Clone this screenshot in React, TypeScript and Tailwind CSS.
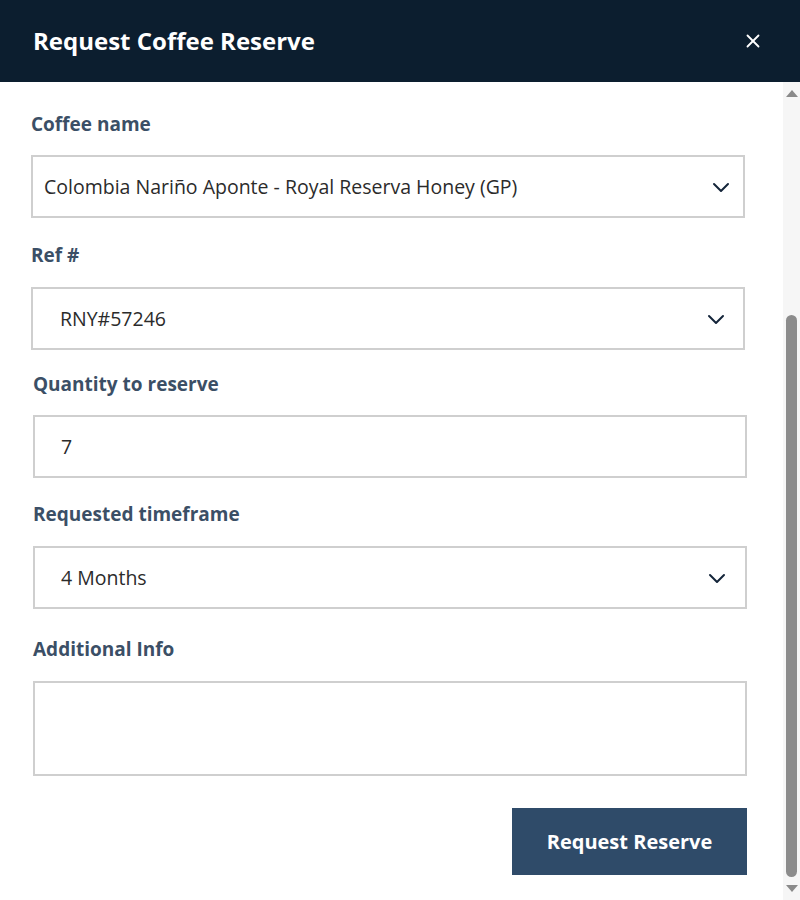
import { X } from "lucide-react";

function Chevron() {
  return (
    <svg width="18" height="12" viewBox="0 0 18 12" fill="none" className="shrink-0">
      <path d="M2 3l7 7 7-7" stroke="#14253a" strokeWidth="2" strokeLinecap="round" strokeLinejoin="round" />
    </svg>
  );
}

function Label({ children, className = "" }: { children: React.ReactNode; className?: string }) {
  return (
    <div className={`text-[19px] leading-6 font-bold text-[#3b4f66] ${className}`}>{children}</div>
  );
}

function SelectBox({ value, className = "", padLeft = "pl-[27px]", chevronRight = "pr-[18px]" }: { value: string; className?: string; padLeft?: string; chevronRight?: string }) {
  return (
    <div className={`flex items-center justify-between h-[63px] border-2 border-[#cfcfcf] bg-white ${padLeft} ${chevronRight} ${className}`}>
      <span className="text-[19.5px] text-[#2b2b2b]">{value}</span>
      <Chevron />
    </div>
  );
}

export default function App() {
  return (
    <div className="w-[800px] h-[900px] flex flex-col bg-white overflow-hidden" style={{ fontFamily: "'Open Sans', 'Noto Sans', sans-serif" }}>
      {/* Header */}
      <div className="h-[82px] shrink-0 bg-[#0c1e2f] flex items-center justify-between pl-[33px] pr-[36px]">
        <h1 className="text-[24px] font-bold text-white">Request Coffee Reserve</h1>
        <X className="size-[22px] text-white" strokeWidth={2} />
      </div>

      <div className="flex-1 flex min-h-0">
        {/* Form */}
        <div className="flex-1 pl-[31px] pr-[38px] pt-[30px]">
          <Label>Coffee name</Label>
          <SelectBox className="mt-[19px]" padLeft="pl-[11px]" chevronRight="pr-[13px]" value="Colombia Nariño Aponte - Royal Reserva Honey (GP)" />

          <Label className="mt-[25px]">Ref #</Label>
          <SelectBox className="mt-[20px]" value="RNY#57246" />

          <div className="pl-[2px] -mr-[2px]">
            <Label className="mt-[22px]">Quantity to reserve</Label>
            <div className="mt-[19px] h-[63px] border-2 border-[#cfcfcf] flex items-center pl-[26px]">
              <span className="text-[19.5px] text-[#2b2b2b]">7</span>
            </div>

            <Label className="mt-[24px]">Requested timeframe</Label>
            <SelectBox className="mt-[20px]" padLeft="pl-[26px]" chevronRight="pr-[19px]" value="4 Months" />

            <Label className="mt-[28px]">Additional Info</Label>
            <div className="mt-[20px] h-[95px] border-2 border-[#cfcfcf]" />

            <div className="flex justify-end mt-[32px]">
              <button className="w-[235px] h-[67px] bg-[#2f4b69] text-white text-[20px] font-bold">
                Request Reserve
              </button>
            </div>
          </div>
        </div>

        {/* Scrollbar */}
        <div className="w-[17px] shrink-0 bg-[#f6f6f6] flex flex-col items-center">
          <div className="h-[22px] flex items-center justify-center">
            <div className="w-0 h-0 border-l-[6px] border-r-[6px] border-b-[7px] border-l-transparent border-r-transparent border-b-[#8a8a8a]" />
          </div>
          <div className="h-[211px]" />
          <div className="w-[11px] h-[562px] rounded-full bg-[#8c8c8c]" />
          <div className="flex-1 flex items-center justify-center">
            <div className="w-0 h-0 border-l-[6px] border-r-[6px] border-t-[7px] border-l-transparent border-r-transparent border-t-[#8a8a8a]" />
          </div>
        </div>
      </div>
    </div>
  );
}
